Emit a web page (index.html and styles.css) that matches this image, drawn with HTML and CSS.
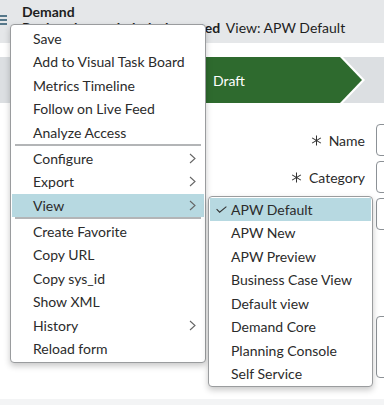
FILE: index.html
```html
<!DOCTYPE html>
<html lang="en">
<head>
    <meta charset="UTF-8">
    <meta name="viewport" content="width=device-width, initial-scale=1.0">
    <title>Demand</title>
    <link rel="stylesheet" href="styles.css">
</head>
<body>

<header class="form-header">
    <span class="nav-toggle"><i></i><i></i><i></i></span>
    <div class="header-title">
        <div class="record-type">Demand</div>
        <div class="record-line">
            <span class="record-name">Replace legacy helpdesk started</span>
            <span class="record-view">View: APW Default</span>
        </div>
    </div>
</header>

<main class="form-body">
    <div class="flow">
        <div class="flow-edge">
            <div class="flow-step">Draft</div>
        </div>
    </div>

    <div class="fields">
        <div class="field">
            <label class="field-label"><svg class="req" viewBox="0 0 12 12"><path d="M6 0.5V11.5M1.2 3.2L10.8 8.8M10.8 3.2L1.2 8.8"/></svg>Name</label>
            <div class="input"></div>
        </div>
        <div class="field">
            <label class="field-label"><svg class="req" viewBox="0 0 12 12"><path d="M6 0.5V11.5M1.2 3.2L10.8 8.8M10.8 3.2L1.2 8.8"/></svg>Category</label>
            <div class="input"></div>
        </div>
        <div class="field">
            <label class="field-label"></label>
            <div class="input"></div>
        </div>
        <div class="field field-tall">
            <label class="field-label"></label>
            <div class="input input-tall"></div>
        </div>
    </div>
</main>

<div class="page-foot"></div>

<ul class="menu context-menu">
    <li class="menu-item">Save</li>
    <li class="menu-item">Add to Visual Task Board</li>
    <li class="menu-item">Metrics Timeline</li>
    <li class="menu-item">Follow on Live Feed</li>
    <li class="menu-item">Analyze Access</li>
    <li class="menu-sep"></li>
    <li class="menu-item">Configure<svg class="chev" viewBox="0 0 7 11"><path d="M1 1L6 5.5L1 10"/></svg></li>
    <li class="menu-item">Export<svg class="chev" viewBox="0 0 7 11"><path d="M1 1L6 5.5L1 10"/></svg></li>
    <li class="menu-item active">View<svg class="chev" viewBox="0 0 7 11"><path d="M1 1L6 5.5L1 10"/></svg></li>
    <li class="menu-sep"></li>
    <li class="menu-item">Create Favorite</li>
    <li class="menu-item">Copy URL</li>
    <li class="menu-item">Copy sys_id</li>
    <li class="menu-item">Show XML</li>
    <li class="menu-item">History<svg class="chev" viewBox="0 0 7 11"><path d="M1 1L6 5.5L1 10"/></svg></li>
    <li class="menu-item">Reload form</li>
</ul>

<ul class="menu sub-menu">
    <li class="menu-item active"><span class="check"><svg viewBox="0 0 11 7"><path d="M0.6 3.2L3.6 6.2L10.4 0.6"/></svg></span>APW Default</li>
    <li class="menu-item"><span class="check"></span>APW New</li>
    <li class="menu-item"><span class="check"></span>APW Preview</li>
    <li class="menu-item"><span class="check"></span>Business Case View</li>
    <li class="menu-item"><span class="check"></span>Default view</li>
    <li class="menu-item"><span class="check"></span>Demand Core</li>
    <li class="menu-item"><span class="check"></span>Planning Console</li>
    <li class="menu-item"><span class="check"></span>Self Service</li>
</ul>

</body>
</html>
```

FILE: styles.css
```css
html, body {
    width: 384px;
    height: 405px;
    overflow: hidden;
}
body {
    margin: 0;
    padding: 0;
    font-family: Lato, "Open Sans", sans-serif;
    font-size: 14px;
    color: #2b2b2b;
    background-color: #fff;
    position: relative;
}

/* header */
.form-header {
    height: 43px;
    box-sizing: border-box;
    padding: 4px 0 0 22px;
    background-color: #e5e7e9;
    position: relative;
}
.nav-toggle {
    position: absolute;
    left: 0;
    top: 15px;
    display: flex;
    flex-direction: column;
    gap: 2px;
}
.nav-toggle i {
    display: block;
    width: 7px;
    height: 2px;
    background-color: #56788a;
}
.header-title {
    line-height: 16px;
    color: #1e1e1e;
    white-space: nowrap;
}
.record-type,
.record-name {
    font-weight: bold;
}
.record-view {
    margin-left: 2px;
}

/* process flow */
.form-body {
    padding-top: 14px;
}
.flow {
    height: 46px;
    padding-left: 200px;
    background-color: #dcdfe2;
    display: flex;
}
.flow-edge {
    width: 165px;
    background-color: #fff;
    clip-path: polygon(0 0, 143px 0, 100% 50%, 143px 100%, 0 100%);
}
.flow-step {
    width: 162px;
    height: 46px;
    box-sizing: border-box;
    padding-left: 13px;
    display: flex;
    align-items: center;
    color: #fff;
    background-color: #2e6a2e;
    clip-path: polygon(0 0, 140px 0, 100% 50%, 140px 100%, 0 100%);
}

/* fields */
.fields {
    padding-top: 21px;
    overflow: hidden;
}
.field {
    display: flex;
    align-items: center;
    gap: 11px;
    margin-bottom: 5px;
}
.field-tall {
    margin-top: 86px;
    margin-bottom: 0;
    align-items: flex-start;
}
.field-label {
    flex: 0 0 365px;
    display: flex;
    justify-content: flex-end;
    align-items: center;
    gap: 7px;
    white-space: nowrap;
}
.req {
    width: 11px;
    height: 11px;
    fill: none;
    stroke: #333;
    stroke-width: 1.1;
}
.input {
    flex: 0 0 160px;
    height: 32px;
    box-sizing: border-box;
    border: 1px solid #8c9196;
    border-radius: 4px;
}
.input-tall {
    height: 62px;
}
.page-foot {
    margin-top: 21px;
    height: 20px;
    background-color: #f3f4f5;
}

/* context menus */
.menu {
    position: absolute;
    margin: 0;
    list-style: none;
    box-sizing: border-box;
    background-color: #fff;
    border: 1px solid #9a9c9e;
    border-radius: 4px;
    box-shadow: 0 3px 6px rgba(0, 0, 0, 0.22);
}
.context-menu {
    left: 10px;
    top: 24px;
    width: 196px;
    padding: 1.5px 1px;
}
.sub-menu {
    left: 208px;
    top: 196px;
    width: 165px;
    padding: 0.5px 1px;
}
.menu-item {
    height: 23.5px;
    display: flex;
    align-items: center;
    justify-content: space-between;
    padding: 0 8px 0 21px;
    white-space: nowrap;
}
.sub-menu .menu-item {
    justify-content: flex-start;
    padding-left: 6px;
}
.menu-item.active {
    background-color: #b7d9e1;
}
.menu-sep {
    height: 2px;
    margin: 0.25px 3px;
    background-color: #b3b5b7;
}
.chev {
    width: 7px;
    height: 11px;
    fill: none;
    stroke: #666;
    stroke-width: 1.1;
}
.check {
    width: 15px;
    display: inline-flex;
    align-items: center;
}
.check svg {
    width: 11px;
    height: 7px;
    fill: none;
    stroke: #333;
    stroke-width: 1.1;
}
```
